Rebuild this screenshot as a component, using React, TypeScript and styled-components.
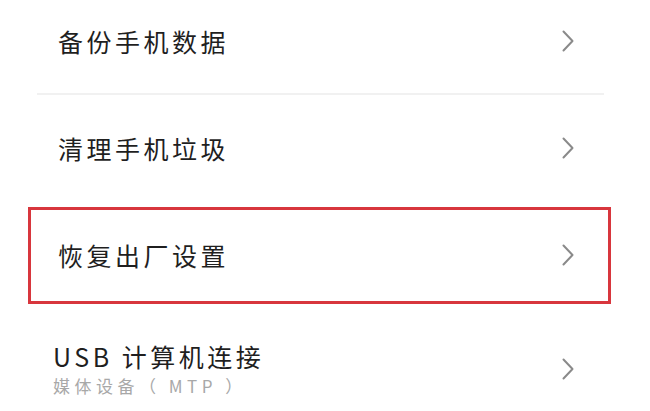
import * as React from 'react';
import styled, { createGlobalStyle } from 'styled-components';

interface Item {
    title: string,
    subtitle?: string,
    divided?: boolean,
    highlighted?: boolean,
}

const items: Item[] = [
    { title: '备份手机数据', divided: true },
    { title: '清理手机垃圾' },
    { title: '恢复出厂设置', highlighted: true },
    { title: 'USB 计算机连接', subtitle: '媒体设备（ MTP ）' },
]

const Chevron = () => (
    <ChevronSvg viewBox="0 0 12 22" width="12" height="22">
        <polyline points="1.5,1.5 10.5,11 1.5,20.5" fill="none" stroke="#8a8a8a" strokeWidth="2" strokeLinecap="round" strokeLinejoin="round" />
    </ChevronSvg>
)

export default function App() {
    return (
        <>
            <GlobalStyle />
            <Page>
                <List>
                    {items.map((e) => {
                        return (
                            <Row key={e.title} $divided={e.divided} $tall={!!e.subtitle}>
                                <Texts $shifted={!!e.subtitle}>
                                    <Title>{e.title}</Title>
                                    {e.subtitle && <Subtitle>{e.subtitle}</Subtitle>}
                                </Texts>
                                <Chevron />
                                {e.highlighted && <Highlight />}
                            </Row>
                        )
                    })}
                </List>
            </Page>
        </>
    )
}

const GlobalStyle = createGlobalStyle`
    html, body {
        margin: 0;
        padding: 0;
        background: #ffffff;
    }
    body {
        font-family: "Noto Sans CJK SC", "Noto Sans", sans-serif;
    }
`

const Page = styled.div`
    width: 650px;
    height: 411px;
    overflow: hidden;
    background: #ffffff;
`

const List = styled.div`
    display: flex;
    flex-direction: column;
    margin-top: -12px;
    padding: 0 46px 0 37px;
`

const Row = styled.div<{ $divided?: boolean, $tall?: boolean }>`
    position: relative;
    display: flex;
    align-items: center;
    justify-content: space-between;
    height: ${(p) => (p.$tall ? '122px' : '107px')};
    padding: 0 30px 0 21px;
    box-sizing: border-box;
    border-bottom: 2px solid ${(p) => (p.$divided ? '#f1f1f1' : 'transparent')};
`

const Texts = styled.div<{ $shifted?: boolean }>`
    display: flex;
    flex-direction: column;
    gap: 2px;
    margin-left: ${(p) => (p.$shifted ? '-5px' : '0')};
`

const Title = styled.span`
    font-size: 25px;
    line-height: 32px;
    letter-spacing: 3.5px;
    color: #1f1f1f;
    white-space: pre;
`

const Subtitle = styled.span`
    font-size: 17px;
    line-height: 24px;
    letter-spacing: 4.5px;
    color: #a8a8a8;
    white-space: pre;
`

const ChevronSvg = styled.svg`
    flex: none;
    display: block;
`

const Highlight = styled.div`
    position: absolute;
    top: 5px;
    bottom: 3px;
    left: -9px;
    right: -7px;
    border: 3px solid #d8363d;
    pointer-events: none;
`
